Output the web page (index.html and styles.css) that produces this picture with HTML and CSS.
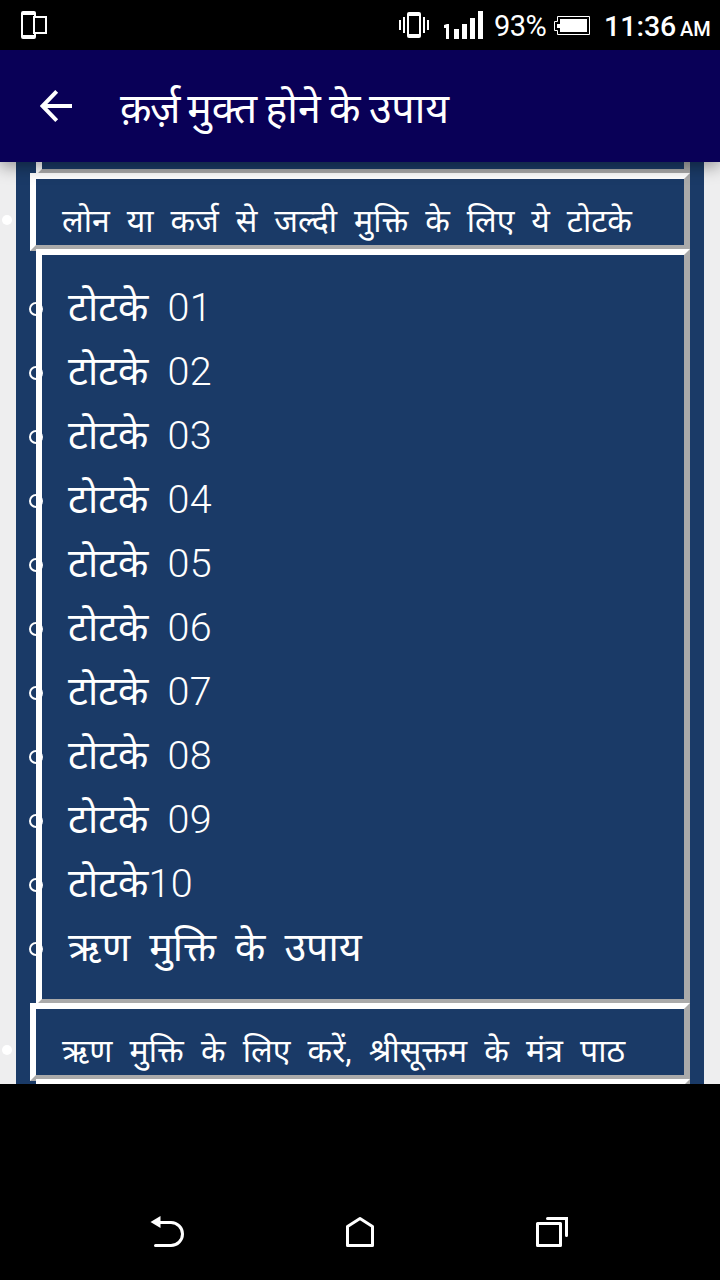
FILE: index.html
```
<!DOCTYPE html>
<html lang="hi">
<head>
<meta charset="utf-8">
<title>क़र्ज़ मुक्त होने के उपाय</title>
<link rel="stylesheet" href="styles.css">
</head>
<body>
<div class="screen">
  <div class="status">
    <svg class="status-device" width="28" height="30" viewBox="0 0 28 30">
      <path d="M3 0h11q2 0 2 2v3h11v18H16v3q0 2-2 2H3q-2 0-2-2V2q0-2 2-2z" fill="#fff"/>
      <path d="M3 4h11v1h-1v18h1v1H3zM15 7h10v14H15z" fill="#000"/>
    </svg>
    <svg class="status-signals" width="90" height="30" viewBox="0 0 90 30">
      <path d="M1 10v10M5 7v16M25 7v16M29 10v10" fill="none" stroke="#fff" stroke-width="2"/>
      <rect x="8" y="2" width="14" height="26" rx="2" fill="#fff"/>
      <rect x="10" y="6" width="10" height="18" fill="#000"/>
      <path d="M50 14v15h-3V18h-2v-3l3-1zM55 19h5v10h-5zM63 14h5v15h-5zM71 8h5v21h-5zM79 1h5v28h-5z" fill="#fff"/>
    </svg>
    <span class="status-percent">93%</span>
    <svg class="status-battery" width="36" height="20" viewBox="0 0 36 20">
      <path d="M3.5.5h32v18h-32v-4h-3v-9h3z" fill="none" stroke="#fff"/>
      <path d="M6 3h27v13H6v-4H3V8h3z" fill="#fff"/>
    </svg>
    <span class="status-time">11:36</span><span class="status-ampm">AM</span>
  </div>

  <header class="appbar">
    <svg class="appbar-back" width="32" height="32" viewBox="0 0 32 32">
      <path d="M32 16H3M16.700 1.400 2.500 16l14.200 14.600" fill="none" stroke="#fff" stroke-width="4"/>
    </svg>
    <h1 class="appbar-title"><span class="title-lead">क़र्ज़</span> मुक्त होने के उपाय</h1>
  </header>

  <main class="viewport" lang="sa">
    <div class="page">
      <div class="panel panel-above"></div>
      <div class="heading"><span class="heading-text">लोन या कर्ज से जल्दी मुक्ति के लिए ये टोटके</span></div>
      <ul class="panel topics">
        <li class="topic">टोटके <span class="num">01</span></li>
        <li class="topic">टोटके <span class="num">02</span></li>
        <li class="topic">टोटके <span class="num">03</span></li>
        <li class="topic">टोटके <span class="num">04</span></li>
        <li class="topic">टोटके <span class="num">05</span></li>
        <li class="topic">टोटके <span class="num">06</span></li>
        <li class="topic">टोटके <span class="num">07</span></li>
        <li class="topic">टोटके <span class="num">08</span></li>
        <li class="topic">टोटके <span class="num">09</span></li>
        <li class="topic">टोटके<span class="num">10</span></li>
        <li class="topic">ऋण मुक्ति के उपाय</li>
      </ul>
      <div class="heading"><span class="heading-text heading-wide">ऋण मुक्ति के लिए करें, श्रीसूक्तम के मंत्र पाठ</span></div>
      <div class="panel panel-below"></div>
    </div>
  </main>

  <nav class="navbar">
    <svg width="36" height="34" viewBox="0 0 36 34">
      <path d="M9 6.500h12a11.500 11.500 0 0 1 0 23H5.500" fill="none" stroke="#fff" stroke-width="3" stroke-linecap="round"/>
      <path d="M.5 6 10.500 0v12z" fill="#fff"/>
    </svg>
    <svg width="36" height="34" viewBox="0 0 36 34">
      <path d="M5.500 10.500 18 2.500l12.500 8v19h-25z" fill="none" stroke="#fff" stroke-width="3" stroke-linejoin="round"/>
    </svg>
    <svg width="36" height="34" viewBox="0 0 36 34">
      <path d="M3.500 7.500h23v22h-23z" fill="none" stroke="#fff" stroke-width="3" stroke-linejoin="round"/>
      <path d="M13.500 2.500h19v17" fill="none" stroke="#fff" stroke-width="3" stroke-linecap="round"/>
    </svg>
  </nav>
</div>
</body>
</html>
```
FILE: styles.css
```
*, *::before { box-sizing: border-box; }
body {
  margin: 0;
  background: #000;
  color: #fff;
  font-family: Roboto, "Noto Sans", "Noto Sans Devanagari", sans-serif;
}
.screen {
  width: 720px;
  height: 1280px;
  display: flex;
  flex-direction: column;
  overflow: hidden;
}
.status {
  height: 50px;
  flex: none;
  display: flex;
  align-items: flex-start;
  padding: 10px 0 0 20px;
  white-space: nowrap;
}
.status-device { margin-top: 1px; flex: none; }
.status-signals { margin-left: 351px; flex: none; }
.status-percent { margin-left: 5px; width: 60px; font-size: 29px; line-height: 33px; letter-spacing: -0.6px; }
.status-battery { margin-top: 6px; flex: none; }
.status-time { margin-left: 14px; width: 76px; font-size: 28.500px; font-weight: 500; line-height: 33px; }
.status-ampm { font-size: 20px; font-weight: 500; line-height: 38px; }
.appbar {
  height: 112px;
  flex: none;
  display: flex;
  align-items: center;
  padding-left: 40px;
  background: #090057;
  box-shadow: 0 4px 16px rgba(0, 0, 0, .4);
  position: relative;
  z-index: 1;
}
.appbar-title {
  margin: 0 0 0 48px;
  padding-top: 5px;
  font-size: 41px;
  font-weight: 400;
  line-height: 60px;
  word-spacing: -1.800px;
  white-space: nowrap;
}
.title-lead { letter-spacing: -1.500px; }
.viewport {
  height: 922px;
  flex: none;
  overflow: hidden;
  background: #eeeeef;
  padding: 0 16px;
}
.page {
  display: flow-root;
  height: 100%;
  padding: 0 14px;
  background: #1a3a67;
}
.panel, .heading {
  border: 6px solid;
  border-color: #fff #aaa #aaa #fff;
  background: #1a3a67;
  position: relative;
}
.panel { margin: -2px 0 0 6px; }
.panel-above { height: 40px; margin-top: -27px; }
.panel-below { height: 40px; }
.heading {
  height: 78px;
  margin-top: -2px;
  padding: 18px 0 0 26px;
  display: flex;
  align-items: center;
}
.heading::before {
  content: "";
  position: absolute;
  left: -34px;
  top: 36px;
  width: 10px;
  height: 10px;
  border-radius: 50%;
  background: #fff;
}
.heading-text {
  font-size: 32px;
  line-height: 48px;
  word-spacing: 9px;
  white-space: nowrap;
}
.heading-wide { word-spacing: 9.250px; }
.topics {
  list-style: none;
  height: 756px;
  padding: 21px 0 0 26px;
}
.topic {
  position: relative;
  height: 64px;
  font-size: 39.500px;
  line-height: 63px;
  word-spacing: 9.200px;
  white-space: nowrap;
}
.topic::before {
  content: "";
  position: absolute;
  left: -39px;
  top: 26px;
  width: 14px;
  height: 14px;
  border: 2px solid #fff;
  border-radius: 50%;
}
.num { font-weight: 300; letter-spacing: .4px; }
.navbar {
  flex: 1;
  display: grid;
  grid-template-columns: repeat(3, 192px);
  justify-content: center;
  justify-items: center;
  align-items: end;
  padding-bottom: 30px;
}
```
